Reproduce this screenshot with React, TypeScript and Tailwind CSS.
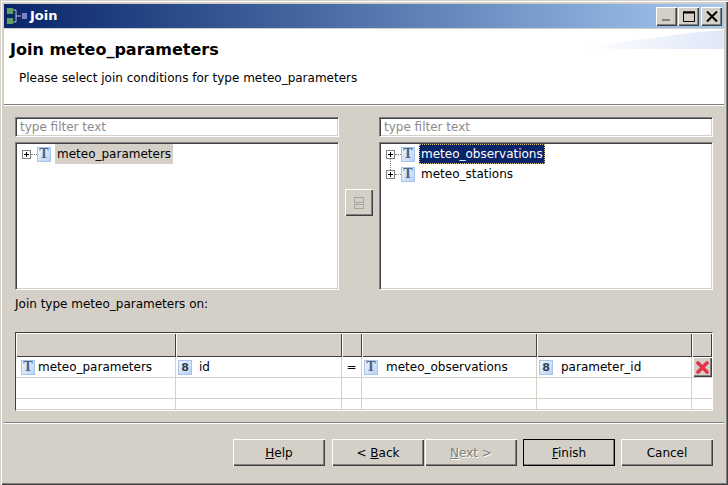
import React from "react";

const raised =
  "shadow-[inset_1px_1px_0_#ffffff,inset_-1px_-1px_0_#404040,inset_-2px_-2px_0_#808080]";
const sunken =
  "border border-t-[#808080] border-l-[#808080] border-r-white border-b-white shadow-[inset_1px_1px_0_#404040,inset_-1px_-1px_0_#d4d0c8]";

const TypeIcon = ({ label = "T" }: { label?: string }) => (
  <span className="flex h-[15px] w-[14px] shrink-0 items-center justify-center border border-[#a9c4ec] bg-linear-to-br from-[#eef4fd] to-[#bcd3f3] font-['Liberation_Serif',serif] text-[14px] leading-none font-bold text-[#48627e]">
    {label}
  </span>
);

const ByteIcon = () => (
  <span className="flex h-[15px] w-[14px] shrink-0 items-center justify-center border border-[#a9c4ec] bg-linear-to-br from-[#eef4fd] to-[#bcd3f3] font-['DejaVu_Sans',sans-serif] text-[11px] leading-none font-bold text-[#2f3f50]">
    8
  </span>
);

const Plus = ({ joined }: { joined?: boolean }) => (
  <span className="relative flex h-[9px] w-[9px] shrink-0">
    {joined && (
      <span className="absolute top-[-11px] left-[4px] h-[11px] border-l border-dotted border-[#808080]" />
    )}
    <svg width="9" height="9" viewBox="0 0 9 9">
      <rect x="0.5" y="0.5" width="8" height="8" fill="#fff" stroke="#808080" />
      <path d="M2 4.5H7M4.5 2V7" stroke="#000" />
    </svg>
  </span>
);

const TreeRow = ({
  label,
  state,
  joined,
}: {
  label: string;
  state?: "focus" | "inactive";
  joined?: boolean;
}) => (
  <div className="flex h-5 items-center pl-[6px]">
    <Plus joined={joined} />
    <span className="w-[6px] border-t border-dotted border-[#808080]" />
    <TypeIcon />
    <span
      className={`ml-1 flex h-5 items-center px-[2px] ${
        state === "focus"
          ? "bg-[#0a246a] text-white outline-1 -outline-offset-1 outline-dotted outline-[#d8c878]"
          : state === "inactive"
            ? "bg-[#d4d0c8]"
            : ""
      }`}
    >
      {label}
    </span>
  </div>
);

const Filter = () => (
  <div className={`flex h-5 items-center bg-white pl-[4px] text-[#8c8c8c] ${sunken}`}>
    type filter text
  </div>
);

const Button = ({
  children,
  primary,
  disabled,
  className = "",
}: {
  children: React.ReactNode;
  primary?: boolean;
  disabled?: boolean;
  className?: string;
}) => (
  <button
    className={`flex h-[27px] w-[92px] items-center justify-center ${raised} ${
      primary ? "outline-1 -outline-offset-1 outline-black" : ""
    } ${disabled ? "text-[#808080] [text-shadow:1px_1px_0_#ffffff]" : ""} ${className}`}
  >
    {children}
  </button>
);

const TitleButton = ({ children }: { children: React.ReactNode }) => (
  <span className={`flex h-[19px] w-[21px] items-center justify-center bg-[#d4d0c8] ${raised}`}>
    {children}
  </span>
);

const headCols = ["w-[160px]", "w-[166px]", "w-[20px]", "w-[175px]", "w-[155px]", "w-[20px]"];

const TableRow = ({ height, children }: { height: string; children?: React.ReactNode[] }) => (
  <div className={`flex ${height} border-b border-[#d4d0c8]`}>
    {headCols.map((w, i) => (
      <div key={w} className={`flex ${w} items-center border-r border-[#d4d0c8] last:border-r-0`}>
        {children?.[i]}
      </div>
    ))}
  </div>
);

const App = () => {
  return (
    <div className="flex h-[485px] w-[728px] flex-col overflow-hidden bg-[#d4d0c8] px-1 pt-1 font-['DejaVu_Sans',sans-serif] text-[12px] text-black shadow-[inset_1px_1px_0_#d4d0c8,inset_2px_2px_0_#ffffff,inset_-1px_-1px_0_#404040,inset_-2px_-2px_0_#808080]">
      {/* title bar */}
      <div className="flex h-6 shrink-0 items-center justify-between bg-linear-to-r from-[#0a246a] to-[#a6caf0] pr-[2px] pl-[2px]">
        <div className="flex items-center gap-[2px]">
          <svg width="22" height="18" viewBox="0 0 22 18">
            <rect x="1" y="1" width="6" height="6" fill="#5fa05f" />
            <rect x="1" y="11" width="6" height="6" fill="#5fa05f" />
            <path d="M7 3H10V15H7M10 9H15" stroke="#b8c4d8" fill="none" />
            <rect x="16" y="6" width="5" height="6" fill="#7c84c8" />
          </svg>
          <span className="text-[13px] font-bold text-white">Join</span>
        </div>
        <div className="flex">
          <TitleButton>
            <svg width="11" height="11" viewBox="0 0 11 11">
              <rect x="1" y="8" width="8" height="2" fill="#808080" />
            </svg>
          </TitleButton>
          <span className="w-px" />
          <TitleButton>
            <svg width="12" height="11" viewBox="0 0 12 11">
              <path d="M0.5 1H11.5V10.5H0.5Z" fill="none" stroke="#000" />
              <path d="M0 1.5H12" stroke="#000" strokeWidth="2" />
            </svg>
          </TitleButton>
          <span className="w-[2px]" />
          <TitleButton>
            <svg width="12" height="11" viewBox="0 0 12 11">
              <path d="M1 0.5L11 10.5M11 0.5L1 10.5" stroke="#000" strokeWidth="2" />
            </svg>
          </TitleButton>
        </div>
      </div>

      {/* wizard header */}
      <div className="relative mt-px h-[75px] shrink-0 bg-white">
        <svg
          className="absolute top-0 right-0"
          width="144"
          height="20"
          viewBox="0 0 144 20"
        >
          <defs>
            <linearGradient id="swoosh" x1="0" x2="1" y1="0" y2="0">
              <stop offset="0" stopColor="#ffffff" />
              <stop offset="1" stopColor="#dfe7f8" />
            </linearGradient>
          </defs>
          <path d="M0 20C50 12 100 4 144 1V20Z" fill="url(#swoosh)" />
        </svg>
        <div className="pt-[10px] pl-[6px] text-[16px] leading-[22px] font-bold">
          Join meteo_parameters
        </div>
        <div className="mt-[7px] pl-[15px] leading-[20px]">
          Please select join conditions for type meteo_parameters
        </div>
      </div>
      <div className="h-[2px] shrink-0 border-t border-[#808080] bg-white" />

      {/* body */}
      <div className="flex flex-1 flex-col px-[11px] pt-[11px]">
        <div className="flex">
          <div className="flex w-[324px] flex-col gap-[5px]">
            <Filter />
            <div className={`h-[148px] bg-white pt-px ${sunken}`}>
              <TreeRow label="meteo_parameters" state="inactive" />
            </div>
          </div>
          <div className="flex w-10 items-center justify-center pb-[2px]">
            <span className={`flex h-[27px] w-[28px] items-center justify-center ${raised}`}>
              <svg width="12" height="14" viewBox="0 0 12 14">
                <rect x="1.5" y="1.5" width="9" height="5" fill="none" stroke="#a8a49c" />
                <rect x="1.5" y="8.5" width="9" height="4" fill="none" stroke="#a8a49c" />
              </svg>
            </span>
          </div>
          <div className="flex w-[334px] flex-col gap-[5px]">
            <Filter />
            <div className={`h-[148px] bg-white pt-px ${sunken}`}>
              <TreeRow label="meteo_observations" state="focus" />
              <TreeRow label="meteo_stations" joined />
            </div>
          </div>
        </div>

        <div className="mt-1 leading-[20px]">Join type meteo_parameters on:</div>

        {/* join table */}
        <div className="mt-[18px] h-[79px] overflow-hidden border border-t-[#404040] border-l-[#404040] border-r-white border-b-white bg-white">
          <div className="flex h-6">
            {headCols.map((w) => (
              <div
                key={w}
                className={`${w} bg-[#d4d0c8] shadow-[inset_1px_1px_0_#ffffff,inset_-1px_-1px_0_#404040]`}
              />
            ))}
          </div>
          <TableRow height="h-[21px]">
            {[
              <span key="a" className="flex items-center gap-[3px] pl-[5px]">
                <TypeIcon />
                <span>meteo_parameters</span>
              </span>,
              <span key="b" className="flex items-center pl-[2px]">
                <ByteIcon />
                <span className="ml-[7px]">id</span>
              </span>,
              <span key="c" className="w-full text-center">
                =
              </span>,
              <span key="d" className="flex items-center pl-[2px]">
                <TypeIcon />
                <span className="ml-[8px]">meteo_observations</span>
              </span>,
              <span key="e" className="flex items-center pl-[2px]">
                <ByteIcon />
                <span className="ml-[8px]">parameter_id</span>
              </span>,
              <span
                key="f"
                className={`ml-px flex h-5 w-[19px] items-center justify-center bg-[#d4d0c8] ${raised}`}
              >
                <svg width="13" height="13" viewBox="0 0 13 13">
                  <path d="M2 2L11 11M11 2L2 11" stroke="#e8324a" strokeWidth="3.6" strokeLinecap="round" />
                </svg>
              </span>,
            ]}
          </TableRow>
          <TableRow height="h-[21px]" />
          <TableRow height="h-[11px]" />
        </div>

        <div className="-mx-[11px] mt-[11px] h-[2px] border-t border-[#808080] bg-white" />

        <div className="mt-[15px] flex justify-end">
          <Button>
            <span>
              <u>H</u>elp
            </span>
          </Button>
          <Button className="ml-[7px]">
            <span>
              &lt; <u>B</u>ack
            </span>
          </Button>
          <Button className="ml-px" disabled>
            <span>
              <u>N</u>ext &gt;
            </span>
          </Button>
          <Button className="ml-[6px]" primary>
            <span>
              <u>F</u>inish
            </span>
          </Button>
          <Button className="ml-[6px]">Cancel</Button>
        </div>
      </div>
    </div>
  );
};

export default App;
